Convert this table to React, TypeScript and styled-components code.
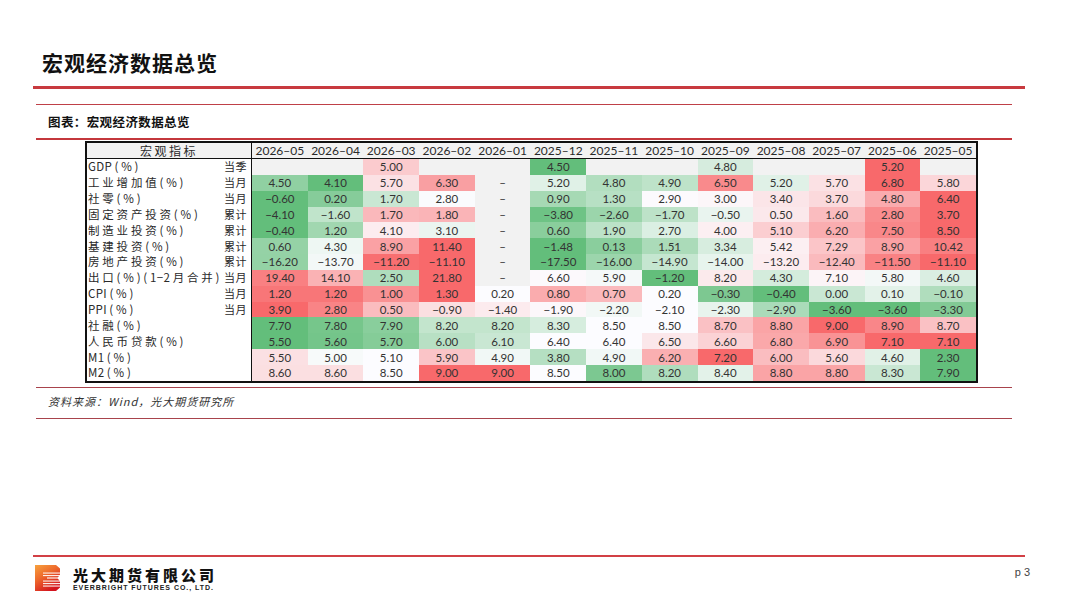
import React from 'react'
import styled, { createGlobalStyle } from 'styled-components'

const GlobalStyle = createGlobalStyle`
  html, body {
    margin: 0;
    padding: 0;
    background: #fff;
  }
  body {
    font-family: 'Noto Sans CJK SC', 'Noto Sans', sans-serif;
    color: #222;
  }
`

type Row = {
  name: string
  unit: string
  values: (number | null | '–')[]
}

const months = [
  '2026–05', '2026–04', '2026–03', '2026–02', '2026–01', '2025–12', '2025–11',
  '2025–10', '2025–09', '2025–08', '2025–07', '2025–06', '2025–05',
]

const D = '–' as const
const rows: Row[] = [
  { name: 'GDP(%)', unit: '当季', values: [null, null, 5.0, null, null, 4.5, null, null, 4.8, null, null, 5.2, null] },
  { name: '工业增加值(%)', unit: '当月', values: [4.5, 4.1, 5.7, 6.3, D, 5.2, 4.8, 4.9, 6.5, 5.2, 5.7, 6.8, 5.8] },
  { name: '社零(%)', unit: '当月', values: [-0.6, 0.2, 1.7, 2.8, D, 0.9, 1.3, 2.9, 3.0, 3.4, 3.7, 4.8, 6.4] },
  { name: '固定资产投资(%)', unit: '累计', values: [-4.1, -1.6, 1.7, 1.8, D, -3.8, -2.6, -1.7, -0.5, 0.5, 1.6, 2.8, 3.7] },
  { name: '制造业投资(%)', unit: '累计', values: [-0.4, 1.2, 4.1, 3.1, D, 0.6, 1.9, 2.7, 4.0, 5.1, 6.2, 7.5, 8.5] },
  { name: '基建投资(%)', unit: '累计', values: [0.6, 4.3, 8.9, 11.4, D, -1.48, 0.13, 1.51, 3.34, 5.42, 7.29, 8.9, 10.42] },
  { name: '房地产投资(%)', unit: '累计', values: [-16.2, -13.7, -11.2, -11.1, D, -17.5, -16.0, -14.9, -14.0, -13.2, -12.4, -11.5, -11.1] },
  { name: '出口(%)(1−2月合并)', unit: '当月', values: [19.4, 14.1, 2.5, 21.8, D, 6.6, 5.9, -1.2, 8.2, 4.3, 7.1, 5.8, 4.6] },
  { name: 'CPI(%)', unit: '当月', values: [1.2, 1.2, 1.0, 1.3, 0.2, 0.8, 0.7, 0.2, -0.3, -0.4, 0.0, 0.1, -0.1] },
  { name: 'PPI(%)', unit: '当月', values: [3.9, 2.8, 0.5, -0.9, -1.4, -1.9, -2.2, -2.1, -2.3, -2.9, -3.6, -3.6, -3.3] },
  { name: '社融(%)', unit: '', values: [7.7, 7.8, 7.9, 8.2, 8.2, 8.3, 8.5, 8.5, 8.7, 8.8, 9.0, 8.9, 8.7] },
  { name: '人民币贷款(%)', unit: '', values: [5.5, 5.6, 5.7, 6.0, 6.1, 6.4, 6.4, 6.5, 6.6, 6.8, 6.9, 7.1, 7.1] },
  { name: 'M1(%)', unit: '', values: [5.5, 5.0, 5.1, 5.9, 4.9, 3.8, 4.9, 6.2, 7.2, 6.0, 5.6, 4.6, 2.3] },
  { name: 'M2(%)', unit: '', values: [8.6, 8.6, 8.5, 9.0, 9.0, 8.5, 8.0, 8.2, 8.4, 8.8, 8.8, 8.3, 7.9] },
]

// three colour scale, like the spreadsheet: green - white - red, midpoint at the median
const GREEN = [99, 190, 123]
const WHITE = [252, 252, 255]
const RED = [248, 105, 107]
const mix = (a: number[], b: number[], t: number) =>
  'rgb(' + a.map((v, i) => Math.round(v + (b[i] - v) * t)).join(',') + ')'

const scaleFor = (values: Row['values']) => {
  const nums = values.filter((v): v is number => typeof v === 'number').sort((a, b) => a - b)
  const min = nums[0]
  const max = nums[nums.length - 1]
  const n = nums.length
  const mid = n % 2 ? nums[(n - 1) / 2] : (nums[n / 2 - 1] + nums[n / 2]) / 2
  return (v: number) => {
    if (v <= mid) return mix(GREEN, WHITE, mid === min ? 1 : (v - min) / (mid - min))
    return mix(WHITE, RED, max === mid ? 0 : (v - mid) / (max - mid))
  }
}

const fmt = (v: number) => (v < 0 ? '−' : '') + Math.abs(v).toFixed(2)

const Page = styled.div`
  width: 1067px;
  height: 600px;
  display: flex;
  flex-direction: column;
  overflow: hidden;
`
const Title = styled.h1`
  margin: 51px 0 0 42px;
  font-size: 21px;
  line-height: 22px;
  font-weight: 700;
  color: #111;
  letter-spacing: 1px;
`
const Rule = styled.div<{ $top: number; $left: number; $width: number; $h?: number; $color?: string }>`
  margin-top: ${p => p.$top}px;
  margin-left: ${p => p.$left}px;
  width: ${p => p.$width}px;
  height: ${p => p.$h ?? 1}px;
  background: ${p => p.$color ?? '#b8424a'};
  flex-shrink: 0;
`
const Caption = styled.div`
  margin: 8px 0 0 48px;
  font-size: 12.5px;
  line-height: 18px;
  font-weight: 700;
  color: #111;
  letter-spacing: 0.4px;
`
const Table = styled.table`
  margin: 1px 0 0 85px;
  width: 893px;
  table-layout: fixed;
  border-collapse: separate;
  border-spacing: 0;
  border: 2px solid #111;
  flex-shrink: 0;
`
const HeadCell = styled.th<{ $first?: boolean }>`
  height: 15px;
  padding: 0;
  background: #f2f2f2;
  border-bottom: 1px solid #111;
  border-right: ${p => (p.$first ? '1.5px solid #111' : 'none')};
  font-family: ${p => (p.$first ? "'Noto Sans CJK SC', sans-serif" : "Lato, 'Noto Sans', sans-serif")};
  font-size: 12px;
  letter-spacing: ${p => (p.$first ? '2.5px' : '0')};
  font-weight: 400;
  color: #2a2a2a;
  text-align: center;
  line-height: 15px;
  white-space: nowrap;
  overflow: hidden;
`
const LabelCell = styled.td`
  height: 15.85px;
  padding: 0 4px 0 1px;
  border-right: 1.5px solid #111;
  background: #fff;
  line-height: 15px;
`
const Label = styled.div`
  display: flex;
  justify-content: space-between;
  font-family: 'Noto Sans CJK SC', sans-serif;
  font-size: 11.5px;
  letter-spacing: 2.8px;
  color: #2a2a2a;
  white-space: nowrap;
`
const Latin = styled.span`
  letter-spacing: 0.3px;
  padding-right: 2.5px;
`
const Unit = styled.span`
  font-size: 11px;
  letter-spacing: 0.5px;
`
const ValueCell = styled.td<{ $bg: string }>`
  height: 15.85px;
  padding: 0;
  background: ${p => p.$bg};
  font-family: Lato, 'Noto Sans', sans-serif;
  font-size: 11.5px;
  color: #333;
  text-align: center;
  line-height: 15px;
`
const Source = styled.div`
  margin: 6px 0 0 48px;
  font-size: 11px;
  line-height: 14px;
  font-style: italic;
  letter-spacing: 1px;
  color: #333;
`
const Spacer = styled.div`
  flex: 1;
`
const Footer = styled.div`
  display: flex;
  align-items: flex-start;
  margin: 8px 0 8px 35px;
  padding-right: 37px;
`
const Brand = styled.div`
  display: flex;
  flex-direction: column;
  margin-left: 12px;
  margin-top: 1px;
`
const BrandName = styled.div`
  font-family: 'Noto Sans CJK SC', sans-serif;
  font-size: 15px;
  line-height: 17px;
  font-weight: 900;
  letter-spacing: 3px;
  color: #111;
`
const BrandEn = styled.div`
  font-family: 'Liberation Sans', Arial, sans-serif;
  font-size: 7px;
  line-height: 9px;
  font-weight: 700;
  letter-spacing: 0.95px;
  color: #222;
`
const PageNo = styled.div`
  margin-left: auto;
  margin-top: 1px;
  font-family: 'Liberation Sans', Arial, sans-serif;
  font-size: 11px;
  color: #444;
`

// latin runs keep their natural spacing, CJK text and brackets are spread out
const renderName = (name: string) =>
  name.split(/([A-Za-z0-9−]+)/).map((part, i) => (i % 2 ? <Latin key={i}>{part}</Latin> : part))

const Logo = () => (
  <svg width="26" height="26" viewBox="0 0 26 26">
    <defs>
      <linearGradient id="eb" x1="0" y1="0" x2="0.6" y2="1">
        <stop offset="0" stopColor="#f7a23e" />
        <stop offset="0.45" stopColor="#ee6a2c" />
        <stop offset="1" stopColor="#d3141f" />
      </linearGradient>
    </defs>
    <path d="M0 0H21L25 3.5V9.5L22.5 13L25 16.5V22.5L21 26H0Z" fill="url(#eb)" />
    {[7.5, 10, 15.5, 18, 20.5].map(y => (
      <rect key={y} x="8" y={y} width="18" height="1.1" fill="#fff" opacity="0.9" />
    ))}
    <rect x="12" y="12.4" width="14" height="1.2" fill="#fff" opacity="0.9" />
  </svg>
)

const App = () => (
  <Page>
    <GlobalStyle />
    <Title>宏观经济数据总览</Title>
    <Rule $top={13} $left={33} $width={992} $h={3} $color="#c83a3f" />
    <Rule $top={15} $left={36} $width={976} $color="#bf4048" />
    <Caption>图表：宏观经济数据总览</Caption>
    <Rule $top={7} $left={36} $width={976} $h={2} $color="#c4373c" />
    <Table>
      <colgroup>
        <col style={{ width: 165 }} />
        {months.map(m => (
          <col key={m} />
        ))}
      </colgroup>
      <thead>
        <tr>
          <HeadCell $first>宏观指标</HeadCell>
          {months.map(m => (
            <HeadCell key={m}>{m}</HeadCell>
          ))}
        </tr>
      </thead>
      <tbody>
        {rows.map(r => {
          const color = scaleFor(r.values)
          return (
            <tr key={r.name}>
              <LabelCell>
                <Label>
                  <span>{renderName(r.name)}</span>
                  <Unit>{r.unit}</Unit>
                </Label>
              </LabelCell>
              {r.values.map((v, i) =>
                typeof v === 'number' ? (
                  <ValueCell key={i} $bg={color(v)}>
                    {fmt(v)}
                  </ValueCell>
                ) : (
                  <ValueCell key={i} $bg="#f2f2f2">
                    {v ?? ''}
                  </ValueCell>
                )
              )}
            </tr>
          )
        })}
      </tbody>
    </Table>
    <Rule $top={4} $left={36} $width={976} $color="#a8434c" />
    <Source>资料来源：Wind，光大期货研究所</Source>
    <Rule $top={10} $left={36} $width={976} $color="#a8434c" />
    <Spacer />
    <Rule $top={0} $left={33} $width={992} $h={2} $color="#d24045" />
    <Footer>
      <Logo />
      <Brand>
        <BrandName>光大期货有限公司</BrandName>
        <BrandEn>EVERBRIGHT FUTURES CO., LTD.</BrandEn>
      </Brand>
      <PageNo>p 3</PageNo>
    </Footer>
  </Page>
)

export default App
